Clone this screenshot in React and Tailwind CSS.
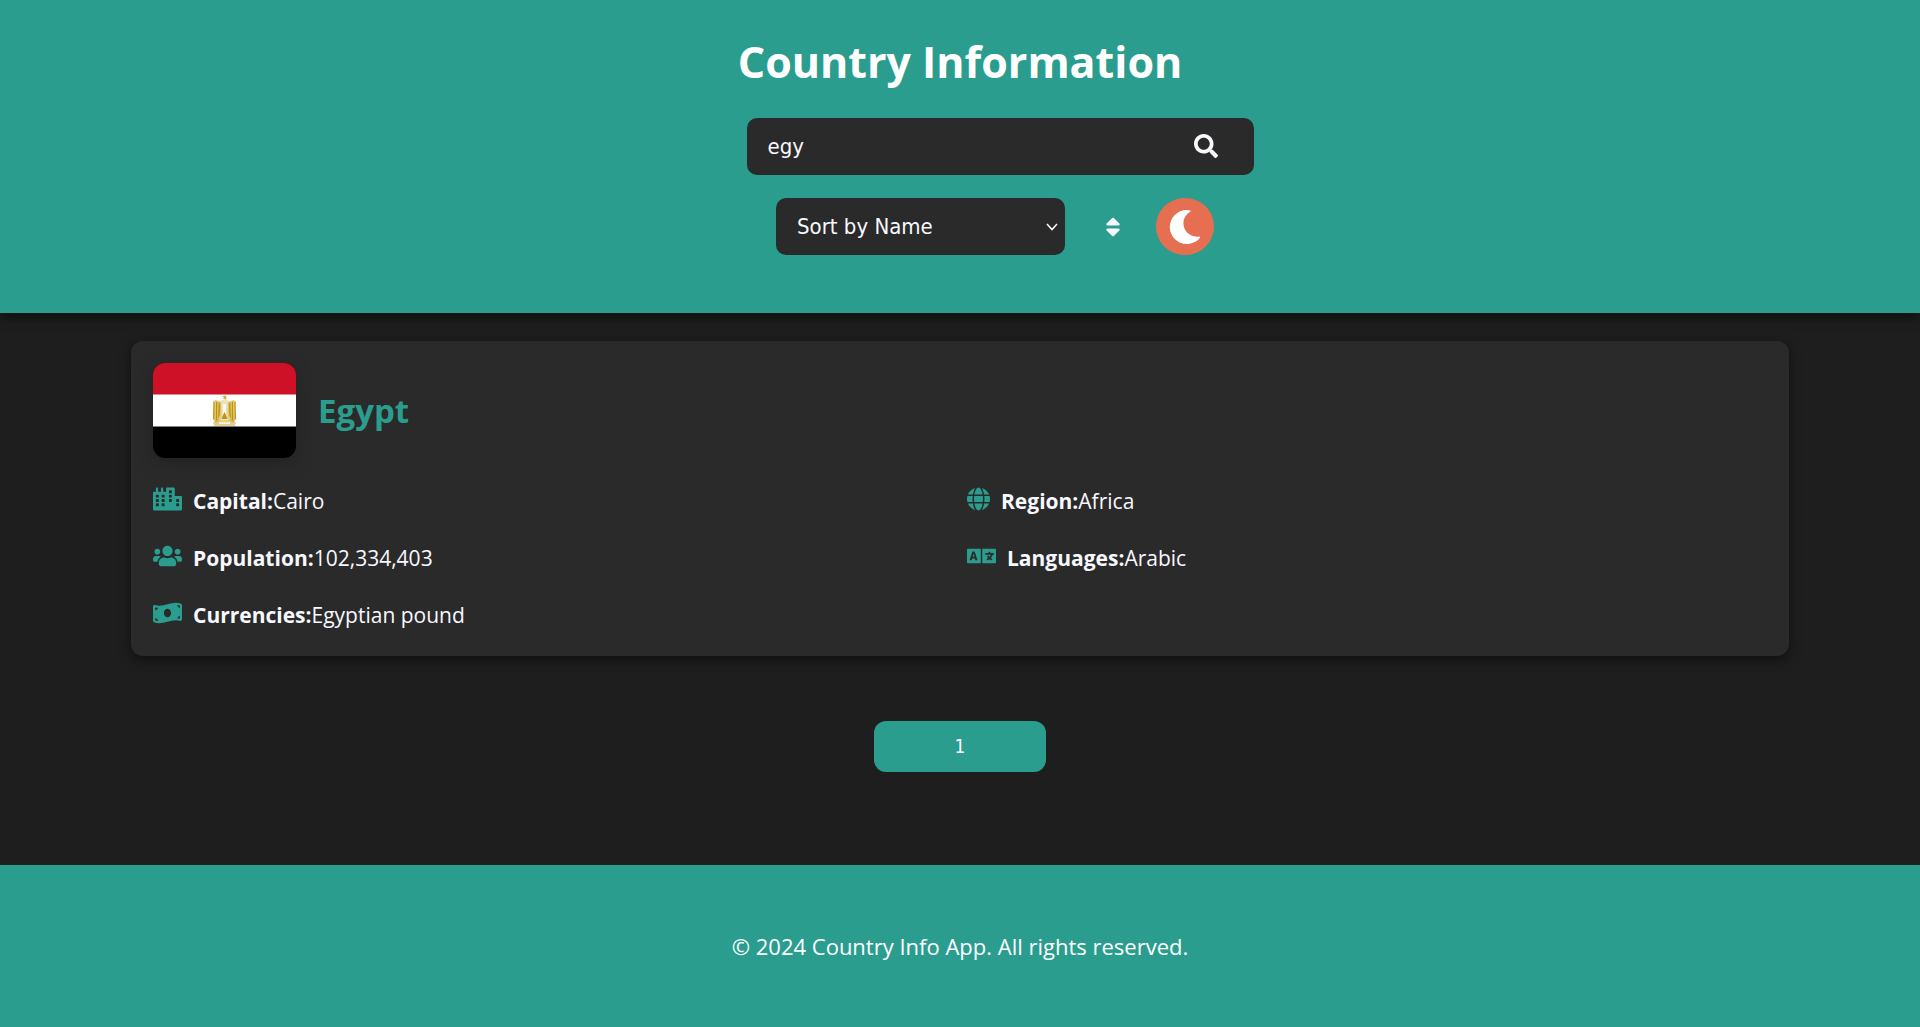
import { useState } from "react";
import {
  FaCity,
  FaUsers,
  FaMoneyBillWave,
  FaGlobe,
  FaLanguage,
  FaSearch,
  FaSort,
  FaMoon,
} from "react-icons/fa";

const WIDE = "w-[29px]";
const SQUARE = "w-[23px]";

const country = {
  name: "Egypt",
  details: [
    { icon: FaCity, size: WIDE, label: "Capital:", value: "Cairo" },
    { icon: FaGlobe, size: SQUARE, label: "Region:", value: "Africa" },
    { icon: FaUsers, size: WIDE, label: "Population:", value: "102,334,403" },
    { icon: FaLanguage, size: WIDE, label: "Languages:", value: "Arabic" },
    { icon: FaMoneyBillWave, size: WIDE, label: "Currencies:", value: "Egyptian pound" },
  ],
};

function EgyptFlag() {
  return (
    <svg
      viewBox="0 0 143 95"
      role="img"
      aria-label="Flag of Egypt"
      className="h-[95px] w-[143px] shrink-0 rounded-xl shadow-[0_5px_18px_rgba(0,0,0,0.2)]"
    >
      <rect width="143" height="95" fill="#000" />
      <rect y="31" width="143" height="32.500" fill="#fff" />
      <rect width="143" height="31.500" fill="#ce1126" />
      <g fill="#c09300">
        <path d="M69.500 33.200l2.400-.8 1.400 1.100v3l-3.200-.4.9-1.600z" opacity=".75" />
        <path d="M68.500 37h6l2 5-1.500 13h-7l-1.500-13z" fill="#efe2b8" />
        <path d="M68 38.500l-6.500-1.800-1.400 20 2.900 3 5.500-4z" opacity=".45" />
        <path d="M75 38.500l6.500-1.800 1.400 20-2.900 3-5.500-4z" opacity=".45" />
        <path d="M60.400 38l1.300 1-.4 18-1.300-1.500zM63 38.500l1.300.5v17.500l-1.600 1.500zM65.600 39.500l1.300.5-.2 12.500-1.600 3.500z" />
        <path d="M82.600 38l-1.300 1 .4 18 1.300-1.500zM80 38.500l-1.300.5v17.500l1.600 1.500zM77.400 39.500l-1.300.5.2 12.500 1.600 3.500z" />
        <path d="M70.200 41h2.600v10h-2.600z" fill="#fff" />
        <path d="M71.500 49l3 7h-6z" />
        <path d="M64 56.500h15l4 3-1.500 3.500h-20l-1.500-3.500z" opacity=".45" />
        <path d="M66 59.500h11v1.300H66z" fill="#fff" />
      </g>
    </svg>
  );
}

export default function App() {
  const [query, setQuery] = useState("egy");

  return (
    <div className="flex min-h-screen flex-col bg-[#1e1e1e] font-['Open_Sans','Noto_Sans',sans-serif] text-[#f8f8ff]">
      <header className="flex flex-col items-center bg-[#2a9d8f] px-6 pt-8 pb-[58px] shadow-[0_4px_10px_rgba(0,0,0,0.6)]">
        <h1 className="text-center text-[43px] leading-[60px] font-bold text-white">
          Country Information
        </h1>

        <form
          role="search"
          onSubmit={(e) => e.preventDefault()}
          className="relative mt-[26px] ml-20 w-full max-w-[507px]"
        >
          <input
            type="text"
            aria-label="Search for a country"
            value={query}
            onChange={(e) => setQuery(e.target.value)}
            className="h-[57px] w-full rounded-[10px] bg-[#2a2a2a] pr-16 pl-[21px] font-['DejaVu_Sans_Condensed','Noto_Sans',sans-serif] text-[22px] outline-none"
          />
          <button
            type="submit"
            aria-label="Search"
            className="absolute top-4 right-9 text-[24px]"
          >
            <FaSearch />
          </button>
        </form>

        <div className="mt-[23px] ml-[70px] flex items-center">
          <div className="relative">
            <select
              aria-label="Sort by"
              className="h-[57px] w-[289px] appearance-none rounded-[10px] bg-[#2a2a2a] pr-8 pl-[21px] font-['DejaVu_Sans_Condensed','Noto_Sans',sans-serif] text-[22px] outline-none"
            >
              <option>Sort by Name</option>
              <option>Sort by Population</option>
            </select>
            <svg
              viewBox="0 0 12 8"
              aria-hidden="true"
              className="pointer-events-none absolute top-[25px] right-[7px] h-2 w-3 fill-none stroke-current stroke-[1.6]"
            >
              <path d="M1 1l5 5.500 5-5.500" />
            </svg>
          </div>
          <button
            type="button"
            aria-label="Toggle sort direction"
            className="ml-9 text-[24px]"
          >
            <FaSort />
          </button>
          <button
            type="button"
            aria-label="Toggle theme"
            className="ml-[31px] flex h-[57px] w-[58px] items-center justify-center rounded-full bg-[#e76f51] text-[34px] text-white"
          >
            <FaMoon />
          </button>
        </div>
      </header>

      <main className="flex grow flex-col items-center px-[131px] pt-7 pb-[92px]">
        <article className="w-full rounded-xl bg-[#2a2a2a] px-[22px] pt-[22px] pb-[26px] shadow-[0_4px_12px_rgba(0,0,0,0.5)]">
          <div className="flex items-center gap-[22px]">
            <EgyptFlag />
            <h2 className="text-[33px] leading-10 font-bold text-[#2a9d8f]">
              {country.name}
            </h2>
          </div>
          <ul className="mt-7 grid grid-cols-2 gap-x-[14px] gap-y-[27px] text-[21px] leading-[30px]">
            {country.details.map(({ icon: Icon, size, label, value }) => (
              <li key={label} className="flex items-center">
                <Icon
                  aria-hidden="true"
                  className={`mr-[11px] mb-1 h-6 shrink-0 text-[#2a9d8f] ${size}`}
                />
                <strong className="font-bold">{label}</strong>
                <span>{value}</span>
              </li>
            ))}
          </ul>
        </article>

        <nav aria-label="Pagination" className="mt-[65px]">
          <button
            type="button"
            aria-current="page"
            className="h-[51px] w-[172px] rounded-xl bg-[#2a9d8f] font-['DejaVu_Sans_Condensed','Noto_Sans',sans-serif] text-[19px] text-white"
          >
            1
          </button>
        </nav>
      </main>

      <footer className="bg-[#2a9d8f] px-6 py-[66px] text-center text-[22px] leading-[30px] text-white">
        <p>© 2024 Country Info App. All rights reserved.</p>
      </footer>
    </div>
  );
}
